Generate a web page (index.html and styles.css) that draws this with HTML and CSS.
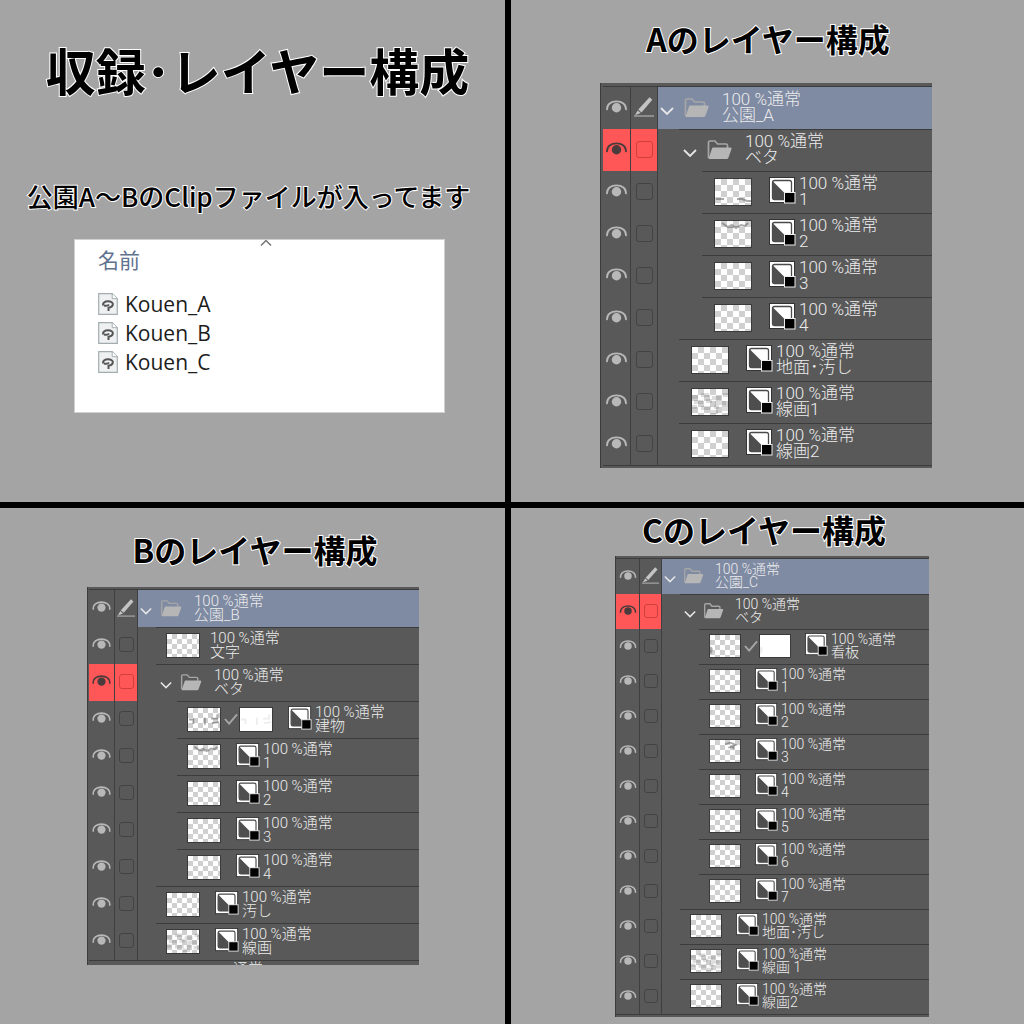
FILE: index.html
```
<!DOCTYPE html>
<html lang="ja">
<head>
    <title>収録・レイヤー構成</title>
    <meta charset="utf-8">
    <meta name="viewport" content="width=device-width, initial-scale=1.0">
    <link rel="stylesheet" href="styles.css">
</head>
<body>
    <svg class="sprite" aria-hidden="true">
        <symbol id="eye" viewBox="0 0 20 12">
            <path d="M1 9.500C0.500 3.500 5 1.200 10 1.200s9.500 2.300 9 8.300" fill="none" stroke="currentColor" stroke-width="1.700"/>
            <circle cx="10" cy="7.200" r="4.500" fill="currentColor"/>
        </symbol>
        <symbol id="pen" viewBox="0 0 20 20">
            <path d="M15.500 0.300l2.800 2.500L7.500 15.400 4.300 12.600z" fill="#c4c4c4"/>
            <path d="M3.700 13.400l3 2.600L1 18.200z" fill="#c4c4c4"/>
            <path d="M0 19h20" stroke="#a0a0a0" stroke-width="1.500"/>
        </symbol>
        <symbol id="chevron" viewBox="0 0 14 8">
            <path d="M1 1l6 6 6-6" fill="none" stroke="#e6e6e6" stroke-width="1.800"/>
        </symbol>
        <symbol id="folder" viewBox="0 0 25 20">
            <path d="M1.500 18V2.500Q1.500 1 3 1h5l2.500 3H19q1.500 0 1.500 1.500V8" fill="none" stroke="#a6a6a6" stroke-width="1.700"/>
            <path d="M6 7.500h17.500q1.500 0 1 1.500l-3 8.500q-.5 1.500-2 1.500H1.500L5 8.500q.3-1 1-1z" fill="#b6b6b6"/>
        </symbol>
        <symbol id="tone" viewBox="0 0 27 27">
            <rect x=".5" y=".5" width="25" height="25" fill="#fff" stroke="#333"/>
            <rect x="3.500" y="3.500" width="19" height="19" rx="2" fill="#fff" stroke="#4a4a4a" stroke-width="1.300"/>
            <path d="M3.500 4v16.500q0 2 2 2H22z" fill="#4e4e4e"/>
            <rect x="15.500" y="15.500" width="10.500" height="10.500" fill="#000" stroke="#eee"/>
        </symbol>
        <symbol id="check" viewBox="0 0 15 12">
            <path d="M1 6l4.500 5L14 1" fill="none" stroke="#a6a6a6" stroke-width="2"/>
        </symbol>
        <symbol id="clip" viewBox="0 0 20 22">
            <path d="M.7.700h13.500l5.100 5v15.600H.7z" fill="#eef0f1" stroke="#a3adb0" stroke-width="1.200"/>
            <path d="M14.200.700v5h5.100" fill="#fff" stroke="#a3adb0"/>
            <path d="M5.500 12.500c-1.500-2.500 1.500-4.200 4.500-4.200s5.300 1.500 4.800 3.500-2.500 2.700-4.300 2.900v3.300" fill="none" stroke="#555" stroke-width="2"/>
            <path d="M6 12.500q3.500 1 5-1" fill="none" stroke="#555" stroke-width="2"/>
        </symbol>
        <symbol id="sort" viewBox="0 0 12 6">
            <path d="M1 5.500l5-5 5 5" fill="none" stroke="#777" stroke-width="1.500"/>
        </symbol>
    </svg>

    <main class="sheet">
        <section class="cell cell-intro">
            <h1>収録･レイヤー構成</h1>
            <p class="lead">公園A～BのClipファイルが入ってます</p>
            <div class="files">
                <svg class="sort"><use href="#sort"/></svg>
                <table>
                    <thead>
                        <tr><th>名前</th></tr>
                    </thead>
                    <tbody>
                        <tr><td><svg><use href="#clip"/></svg>Kouen_A</td></tr>
                        <tr><td><svg><use href="#clip"/></svg>Kouen_B</td></tr>
                        <tr><td><svg><use href="#clip"/></svg>Kouen_C</td></tr>
                    </tbody>
                </table>
            </div>
        </section>

        <section class="cell cell-a">
            <h2>Aのレイヤー構成</h2>
            <div class="layers" data-set="a"></div>
        </section>

        <section class="cell cell-b">
            <h2>Bのレイヤー構成</h2>
            <div class="layers" data-set="b"></div>
        </section>

        <section class="cell cell-c">
            <h2>Cのレイヤー構成</h2>
            <div class="layers" data-set="c"></div>
        </section>
    </main>

    <script src="layers.js"></script>
</body>
</html>
```
FILE: styles.css
```
* {
    box-sizing: border-box;
}

body {
    margin: 0;
    background: #000;
    font-family: "Noto Sans CJK JP", sans-serif;
}

svg {
    display: block;
    flex: none;
}

.sprite {
    display: none;
}

.sheet {
    display: grid;
    grid-template-columns: 505fr 513fr;
    grid-template-rows: auto 1fr;
    gap: 6px;
    min-height: 100vh;
}

.cell {
    background: #a4a4a4;
}

h1,
h2,
.lead {
    margin: 0;
    color: #000;
    text-align: center;
    white-space: nowrap;
    font-weight: 700;
    -webkit-text-stroke: 2px #fff;
    paint-order: stroke fill;
}

h1 {
    font-size: 50px;
    line-height: 60px;
}

h2 {
    font-size: 32px;
    line-height: 40px;
}

.lead {
    margin-top: 81px;
    font-size: 26px;
    line-height: 32px;
    font-weight: 500;
}

.cell-intro {
    padding-top: 39px;
}

.cell-intro h1 {
    padding-left: 10px;
}

.cell-intro .lead {
    padding-right: 8px;
}

.cell-a {
    padding: 18px 92px 34px 89px;
}

.cell-b {
    padding: 21px 86px 0 87px;
}

.cell-c {
    padding: 1px 95px 7px 104px;
}

.cell-a h2,
.cell-b h2 {
    padding-left: 4px;
}

.cell-c h2 {
    padding-right: 16px;
}

.cell-a .layers {
    margin-top: 25px;
}

.cell-b .layers {
    margin-top: 18px;
}

.cell-c .layers {
    margin-top: 7px;
}

/* file list */
.files {
    position: relative;
    margin: 27px 60px 0 74px;
    padding: 3px 23px 36px;
    background: #fff;
    border: 1px solid #d0d0d0;
}

.files table {
    border-collapse: collapse;
}

.files th {
    padding: 0 0 14px;
    color: #5f7290;
    font-size: 21px;
    line-height: 32px;
    font-weight: 400;
    text-align: left;
}

.files td {
    display: flex;
    align-items: center;
    gap: 7px;
    padding: 0;
    height: 29px;
    color: #1c1c1c;
    font: 21px "Open Sans", sans-serif;
}

.files td svg {
    width: 20px;
    height: 22px;
}

.files .sort {
    position: absolute;
    top: 0;
    left: 50%;
    width: 12px;
    height: 6px;
}

/* layer palette */
.layers {
    overflow: hidden;
    background: #595959;
    border-left: 1px solid #3c3c3c;
    color: #ececec;
}

.cell-a .layers {
    --top: 3px;
    --row: 42px;
    --eye: 28px;
    --link: 27px;
    --box: 17px;
    --indent-1: 21px;
    --indent-2: 44px;
    --pad: 12px;
    --thumb-w: 38px;
    --thumb-h: 28px;
    --tone: 27px;
    --tone-gap: 17px;
    --chevron: 14px;
    --chevron-gap: 10px;
    --folder: 25px;
    --folder-gap: 13px;
    --text: 17px;
    --line: 16px;
    --check: 6px;
    padding-left: 2px;
}

.cell-b .layers {
    --top: 2px;
    --row: 37px;
    --eye: 26px;
    --link: 23px;
    --box: 15px;
    --indent-1: 18px;
    --indent-2: 39px;
    --pad: 10px;
    --thumb-w: 34px;
    --thumb-h: 25px;
    --tone: 24px;
    --tone-gap: 15px;
    --chevron: 12px;
    --chevron-gap: 8px;
    --folder: 22px;
    --folder-gap: 12px;
    --text: 15px;
    --line: 14px;
    --check: 5px;
    padding-left: 1px;
}

.cell-c .layers {
    --top: 2px;
    --row: 35px;
    --eye: 24px;
    --link: 22px;
    --box: 14px;
    --indent-1: 18px;
    --indent-2: 37px;
    --pad: 10px;
    --thumb-w: 32px;
    --thumb-h: 24px;
    --tone: 23px;
    --tone-gap: 14px;
    --chevron: 12px;
    --chevron-gap: 7px;
    --folder: 21px;
    --folder-gap: 11px;
    --text: 14px;
    --line: 13px;
    --check: 5px;
}

.layers::before {
    content: "";
    display: block;
    height: var(--top);
    border-bottom: 1px solid #3c3c3c;
}

.tail {
    height: 3px;
    border-top: 1px solid #3c3c3c;
}

.row {
    display: flex;
    height: var(--row);
}

.eye,
.link {
    display: flex;
    align-items: center;
    justify-content: center;
    border-right: 1px solid #3f3f3f;
}

.eye {
    width: var(--eye);
    padding-bottom: 4px;
}

.link {
    width: var(--link);
    padding-bottom: 2px;
}

.row button {
    display: flex;
    padding: 0;
    background: none;
    border: 0;
    color: #b8b8b8;
    cursor: pointer;
}

.eye svg {
    width: calc(var(--box) + 4px);
    height: calc(var(--box) - 4px);
}

.link svg {
    width: calc(var(--box) + 3px);
    height: calc(var(--box) + 3px);
}

.link input {
    appearance: none;
    margin: 0;
    width: var(--box);
    height: var(--box);
    border: 1px solid #434343;
    border-radius: 3px;
}

.ruled .eye,
.ruled .link {
    background: #ff5757;
}

.ruled .link input {
    border-color: #d03e3e;
}

.ruled .eye button {
    color: #4a3c3c;
}

.body {
    display: flex;
    flex: 1;
    align-items: center;
    padding-bottom: 2px;
    border-top: 1px solid #3c3c3c;
    white-space: nowrap;
}

.level-0 .body {
    padding-left: 2px;
    background: #7f8aa3;
    border-top-color: #7f8aa3;
}

.level-1 .body {
    margin-left: var(--indent-1);
    padding-left: var(--pad);
}

.level-2 .body {
    margin-left: var(--indent-2);
    padding-left: var(--pad);
}

.level-1.group .body {
    padding-left: 4px;
}

.chevron svg {
    width: var(--chevron);
    height: 8px;
    margin: 6px var(--chevron-gap) 0 0;
}

.folder {
    width: var(--folder);
    height: calc(var(--folder) - 5px);
    margin-right: var(--folder-gap);
}

.thumb {
    width: var(--thumb-w);
    height: var(--thumb-h);
    border: 1px solid #3a3a3a;
    background: repeating-conic-gradient(#d0d0d0 0 25%, #fff 0 50%) 0 0 / calc(var(--check) * 2) calc(var(--check) * 2);
}

.thumb.mask {
    background: #fff;
}

.check {
    width: 14px;
    height: 12px;
    margin: 0 1px 0 3px;
}

.tone {
    width: var(--tone);
    height: var(--tone);
    margin: 0 3px 3px var(--tone-gap);
}

.text {
    padding-bottom: 1px;
    font-family: Roboto, "Noto Sans CJK JP", sans-serif;
    font-size: var(--text);
    line-height: var(--line);
    font-weight: 300;
}

.text span {
    display: block;
}

.no-tone .text {
    margin-left: 10px;
}

/* next row, scrolled out of the palette */
.cut {
    height: 5px;
    overflow: hidden;
    padding-left: 144px;
    border-top: 1px solid #3c3c3c;
    font-size: 15px;
    line-height: 14px;
    font-weight: 300;
}
```
FILE: layers.js
```
const OPACITY = '100 %通常';

// marks: strokes drawn over the checkerboard of a thumbnail
const marks = {
    ground: 'M1 20h8M22 20h5l5 2h4',
    roof: 'M7 2l6 4 4-2 4 3 5-3 4 1 3-3M12 6h12',
    lines: 'M0 8h6M9 6h8M20 9h9M31 6h5M2 13h9M14 12h6M23 14h11M0 18h5M9 19h10M22 18h5M30 20h6M18 23h8',
    town: 'M1 13h5v5M19 11v8M26 12h7v-5M27 17l8-1',
    sign: 'M1 14v8M2 15v5',
    tree: 'M18 5l6-2 8 3M22 9l8-3M28 3v8'
};

const sets = {
    a: [
        { level: 0, type: 'group', name: '公園_A', selected: true },
        { level: 1, type: 'group', name: 'ベタ', ruled: true },
        { level: 2, name: '1', mark: 'ground' },
        { level: 2, name: '2', mark: 'roof' },
        { level: 2, name: '3' },
        { level: 2, name: '4' },
        { level: 1, name: '地面･汚し' },
        { level: 1, name: '線画1', mark: 'lines' },
        { level: 1, name: '線画2' }
    ],
    b: [
        { level: 0, type: 'group', name: '公園_B', selected: true },
        { level: 1, type: 'plain', name: '文字' },
        { level: 1, type: 'group', name: 'ベタ', ruled: true },
        { level: 2, name: '建物', mask: true, mark: 'town' },
        { level: 2, name: '1', mark: 'roof' },
        { level: 2, name: '2' },
        { level: 2, name: '3' },
        { level: 2, name: '4' },
        { level: 1, name: '汚し' },
        { level: 1, name: '線画', mark: 'lines' }
    ],
    c: [
        { level: 0, type: 'group', name: '公園_C', selected: true },
        { level: 1, type: 'group', name: 'ベタ', ruled: true },
        { level: 2, name: '看板', mask: true, mark: 'sign' },
        { level: 2, name: '1' },
        { level: 2, name: '2' },
        { level: 2, name: '3', mark: 'tree' },
        { level: 2, name: '4' },
        { level: 2, name: '5' },
        { level: 2, name: '6' },
        { level: 2, name: '7' },
        { level: 1, name: '地面･汚し' },
        { level: 1, name: '線画 1', mark: 'lines' },
        { level: 1, name: '線画2' }
    ]
};

function icon(id, cls) {
    return `<svg class="${cls || ''}"><use href="#${id}"/></svg>`;
}

function thumb(mark, cls, opacity) {
    const width = mark === 'lines' ? 4 : 2;
    const path = mark ? `<path d="${marks[mark]}" fill="none" stroke="#555" stroke-width="${width}" opacity="${opacity}"/>` : '';
    return `<svg class="thumb ${cls}" viewBox="0 0 36 26">${path}</svg>`;
}

function rowBody(layer) {
    if (layer.type === 'group') {
        return `<button class="chevron" aria-label="${layer.name} 開閉">${icon('chevron')}</button>` + icon('folder', 'folder');
    }
    let html = thumb(layer.mark, '', layer.mark === 'lines' ? 0.2 : 0.5);
    if (layer.mask) {
        html += icon('check', 'check') + thumb(layer.mark, 'mask', 0.1);
    }
    if (layer.type !== 'plain') {
        html += icon('tone', 'tone');
    }
    return html;
}

function row(layer) {
    const link = layer.selected
        ? icon('pen')
        : `<input type="checkbox" aria-label="${layer.name} 選択">`;
    const classes = ['row', 'level-' + layer.level];
    if (layer.type === 'group') classes.push('group');
    if (layer.type === 'plain') classes.push('no-tone');
    if (layer.ruled) classes.push('ruled');

    return `<div class="${classes.join(' ')}">
        <div class="eye"><button aria-label="${layer.name} 表示">${icon('eye')}</button></div>
        <div class="link">${link}</div>
        <div class="body">
            ${rowBody(layer)}
            <div class="text"><span>${OPACITY}</span><span>${layer.name}</span></div>
        </div>
    </div>`;
}

document.querySelectorAll('.layers').forEach((el) => {
    const id = el.dataset.set;
    const end = id === 'b' ? '<div class="cut">通常</div>' : '<div class="tail"></div>';
    el.innerHTML = sets[id].map(row).join('') + end;
});
```
